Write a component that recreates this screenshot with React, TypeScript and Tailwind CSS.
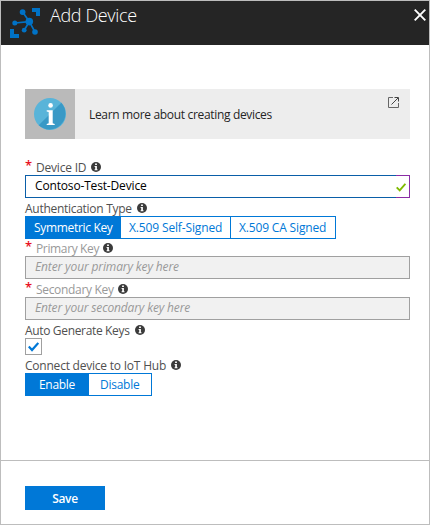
import type { ReactNode } from "react";

function InfoDot() {
  return (
    <svg className="mb-[3px] size-[10px] shrink-0" viewBox="0 0 10 10">
      <circle cx="5" cy="5" r="5" fill="#3b3b3b" />
      <path d="M4.1 1.4h1.8v1.5H4.1zM3.6 4h2.3v3.2h.6v1H3.6v-1h.6V5h-.6z" fill="#fff" />
    </svg>
  );
}

function Label({
  text,
  width,
  tracking,
  height = "h-[18px]",
  required = false,
  muted = false,
}: {
  text: string;
  width: string;
  tracking: string;
  height?: string;
  required?: boolean;
  muted?: boolean;
}) {
  return (
    <div className={`flex items-end ${height}`}>
      {required && (
        <span className="mb-[2px] h-4 w-[11px] shrink-0 text-[13px] leading-4 font-semibold text-[#e81123]">*</span>
      )}
      <span
        className={`shrink-0 leading-[14px] whitespace-nowrap ${width} ${tracking} ${muted ? "text-[#999]" : "text-[#505050]"}`}
      >
        {text}
      </span>
      <InfoDot />
    </div>
  );
}

function Segment({
  children,
  className,
  active = false,
}: {
  children: ReactNode;
  className: string;
  active?: boolean;
}) {
  return (
    <button
      className={`h-full whitespace-nowrap text-left leading-[21px] ${className} ${
        active ? "bg-[#0078d7] text-white" : "text-[#0078d7]"
      }`}
    >
      {children}
    </button>
  );
}

export default function App() {
  return (
    <div className="flex h-[525px] w-[430px] flex-col border border-[#bdbdbd] bg-white font-['Open_Sans','Noto_Sans',sans-serif] text-[12px] text-[#252525]">
      <header className="flex h-[44px] shrink-0 bg-[#252525]">
        <svg className="mt-[7px] ml-[9px] size-[30px] shrink-0" viewBox="0 0 30 30">
          <g fill="#0072c6">
            <path d="M22 0h8v8h-4V4h-4zM0 21h4v5h5v4H0z" />
            <circle cx="12.6" cy="4.1" r="2.9" />
            <circle cx="4.8" cy="15" r="2.5" />
            <circle cx="19.3" cy="13.6" r="3.8" />
            <circle cx="14.2" cy="22.2" r="2.4" />
            <circle cx="25" cy="24" r="2.8" />
          </g>
          <path
            d="M12.6 4.1l6.7 9.5M4.8 15l14.5-1.4M14.2 22.2l5.1-8.6M25 24l-5.7-10.4"
            stroke="#0072c6"
            strokeWidth="1.7"
          />
        </svg>
        <h1 className="mt-[2px] ml-[10px] text-[18px] leading-6 font-light tracking-[-0.36px] whitespace-nowrap text-white">
          Add Device
        </h1>
        <svg className="mt-2 mr-[3px] ml-auto size-3 shrink-0" viewBox="0 0 12 12">
          <path d="M.7.7l10.6 10.6M11.3.7L.7 11.3" stroke="#fff" strokeWidth="1.9" />
        </svg>
      </header>

      <main className="flex-1 px-6 pt-[44px]">
        <div className="flex h-[50px] w-[385px] bg-[#ededed]">
          <div className="flex w-[50px] shrink-0 items-center justify-center bg-[#bababa]">
            <svg className="size-8" viewBox="0 0 32 32">
              <circle cx="16" cy="16" r="16" fill="#59b4d9" />
              <path d="M27.3 4.7A16 16 0 0 1 4.7 27.3z" fill="#3999c6" />
              <circle cx="16.6" cy="7.4" r="2.3" fill="#fff" />
              <path d="M12.7 12.2h6v13l2 .7v1.2h-8v-1.2l2-.7V14.1l-2-.6z" fill="#fff" />
            </svg>
          </div>
          <span className="ml-[14px] leading-[51px] tracking-[-0.33px] whitespace-nowrap">
            Learn more about creating devices
          </span>
          <svg className="mt-2 mr-[11px] ml-auto size-[11px] shrink-0" viewBox="0 0 11 11" fill="none">
            <path d="M5 .5H.5v10h10V6" stroke="#666" />
            <path d="M3.5 7.5L10 1M6.5.5h4v4" stroke="#444" />
          </svg>
        </div>

        <form className="mt-[18px] w-[385px]">
          <Label text="Device ID" width="w-[55px]" tracking="tracking-[-0.2px]" required />
          <div className="flex h-[23px]">
            <div className="flex-1 border border-r-0 border-[#0a5ea8] pl-[9px] leading-[20px] tracking-[-0.16px] whitespace-nowrap text-black">
              Contoso-Test-Device
            </div>
            <div className="flex w-[14px] items-center border border-l-0 border-[#8a2da5]">
              <svg className="mt-px h-[9px] w-[10px]" viewBox="0 0 10 9">
                <path d="M.7 4.4L3.7 7.4 9.4.8" stroke="#7fba00" strokeWidth="1.9" fill="none" />
              </svg>
            </div>
          </div>

          <Label text="Authentication Type" width="w-[112px]" tracking="tracking-[-0.28px]" />
          <div className="flex h-[23px] w-[311px] border border-l-0 border-[#0078d7]">
            <Segment active className="w-[96px] pl-[9px] tracking-[-0.32px]">
              Symmetric Key
            </Segment>
            <Segment className="w-[109px] pl-[8px] tracking-[-0.14px]">X.509 Self-Signed</Segment>
            <Segment className="w-[105px] border-l border-[#0078d7] pl-[8px] tracking-[-0.16px]">
              X.509 CA Signed
            </Segment>
          </div>

          <Label text="Primary Key" width="w-[67px]" tracking="tracking-[-0.36px]" height="h-[17px]" required muted />
          <div className="h-[23px] border border-[#a0a0a0] bg-[#f1f1f1] pl-[9px] leading-[20px] tracking-[-0.13px] text-[#999] italic">
            Enter your primary key here
          </div>

          <Label text="Secondary Key" width="w-[82px]" tracking="tracking-[-0.32px]" required muted />
          <div className="h-[23px] border border-[#a0a0a0] bg-[#f1f1f1] pl-[9px] leading-[20px] tracking-[-0.15px] text-[#999] italic">
            Enter your secondary key here
          </div>

          <Label text="Auto Generate Keys" width="w-[110px]" tracking="tracking-[-0.34px]" />
          <div className="flex size-[17px] items-center justify-center border border-[#a0a0a0] bg-white">
            <svg className="h-[10px] w-[11px]" viewBox="0 0 11 10">
              <path d="M.8 4.6L4 8 10.3.9" stroke="#0078d7" strokeWidth="2.2" fill="none" />
            </svg>
          </div>

          <Label text="Connect device to IoT Hub" width="w-[146px]" tracking="tracking-[-0.22px]" />
          <div className="flex h-[23px] w-[127px] border border-l-0 border-[#0078d7]">
            <Segment active className="w-[64px] pl-[14px] tracking-[-0.3px]">
              Enable
            </Segment>
            <Segment className="w-[62px] pl-[11px] tracking-[-0.25px]">Disable</Segment>
          </div>
        </form>
      </main>

      <footer className="h-[64px] shrink-0 border-t border-[#bdbdbd] pt-[25px] pl-6">
        <button className="block h-6 w-[80px] bg-[#0078d7] text-center leading-[25px] font-semibold tracking-[-0.3px] text-white">
          Save
        </button>
      </footer>
    </div>
  );
}
